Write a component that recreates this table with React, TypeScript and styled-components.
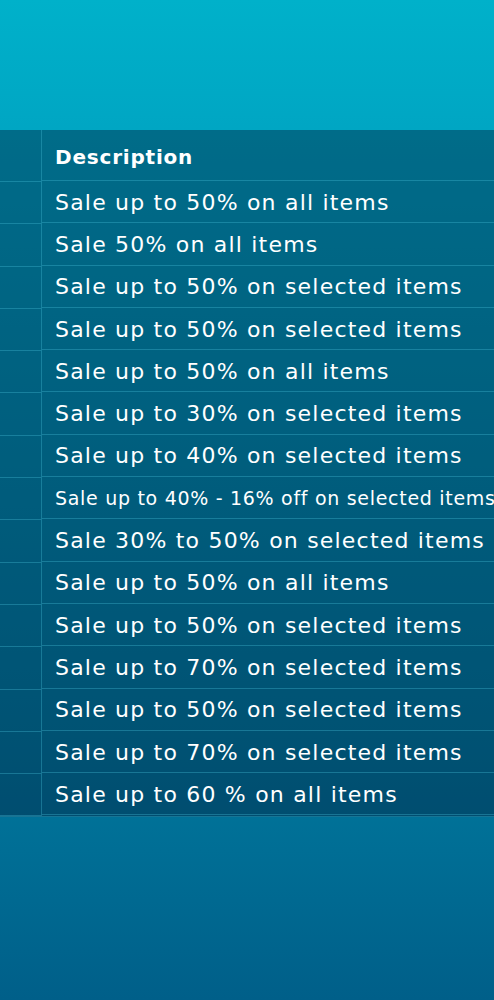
import styled, { createGlobalStyle } from "styled-components";

const GlobalStyle = createGlobalStyle`
  html, body {
    margin: 0;
    padding: 0;
  }
  body {
    font-family: "DejaVu Sans", "Liberation Sans", sans-serif;
  }
`;

const Page = styled.div`
  min-height: 1000px;
  background: linear-gradient(180deg, #00b1ca 0%, #00a4c2 15%, #00789d 75%, #005f89 100%);
  padding-top: 130px;
  box-sizing: border-box;
  overflow: hidden;
`;

const Table = styled.div`
  display: grid;
  grid-template-columns: 42px 1fr;
  background: rgba(0, 28, 58, 0.42);
  border-bottom: 1px solid rgba(70, 190, 215, 0.35);
`;

const Row = styled.div<{ $head?: boolean }>`
  display: contents;

  & > div {
    height: ${(p) => (p.$head ? "51px" : "41.3px")};
    border-bottom: 1px solid rgba(70, 190, 215, 0.35);
  }
`;

const Side = styled.div`
  border-right: 1px solid rgba(70, 190, 215, 0.35);
`;

const Cell = styled.div<{ $size?: number; $spacing?: number; $head?: boolean }>`
  display: flex;
  align-items: center;
  padding-left: 13px;
  color: #ffffff;
  white-space: nowrap;
  overflow: hidden;
  font-size: ${(p) => p.$size ?? 22}px;
  font-weight: ${(p) => (p.$head ? 700 : 400)};
  letter-spacing: ${(p) => p.$spacing ?? 1.2}px;
  padding-top: ${(p) => (p.$head ? "4px" : "0")};
  box-sizing: border-box;
`;

// the long promo text is smaller and runs past the right edge
const rows: { text: string; size?: number; spacing?: number }[] = [
  { text: "Sale up to 50% on all items" },
  { text: "Sale 50% on all items" },
  { text: "Sale up to 50% on selected items" },
  { text: "Sale up to 50% on selected items" },
  { text: "Sale up to 50% on all items" },
  { text: "Sale up to 30% on selected items" },
  { text: "Sale up to 40% on selected items" },
  { text: "Sale up to 40% - 16% off on selected items", size: 19, spacing: 0.7 },
  { text: "Sale 30% to 50% on selected items" },
  { text: "Sale up to 50% on all items" },
  { text: "Sale up to 50% on selected items" },
  { text: "Sale up to 70% on selected items" },
  { text: "Sale up to 50% on selected items" },
  { text: "Sale up to 70% on selected items" },
  { text: "Sale up to 60 % on all items" },
];

const App = () => {
  return (
    <Page>
      <GlobalStyle />
      <Table>
        <Row $head>
          <Side />
          <Cell $head $size={20} $spacing={0.8}>
            Description
          </Cell>
        </Row>
        {rows.map((r, i) => (
          <Row key={i}>
            <Side />
            <Cell $size={r.size} $spacing={r.spacing}>
              {r.text}
            </Cell>
          </Row>
        ))}
      </Table>
    </Page>
  );
};

export default App;
